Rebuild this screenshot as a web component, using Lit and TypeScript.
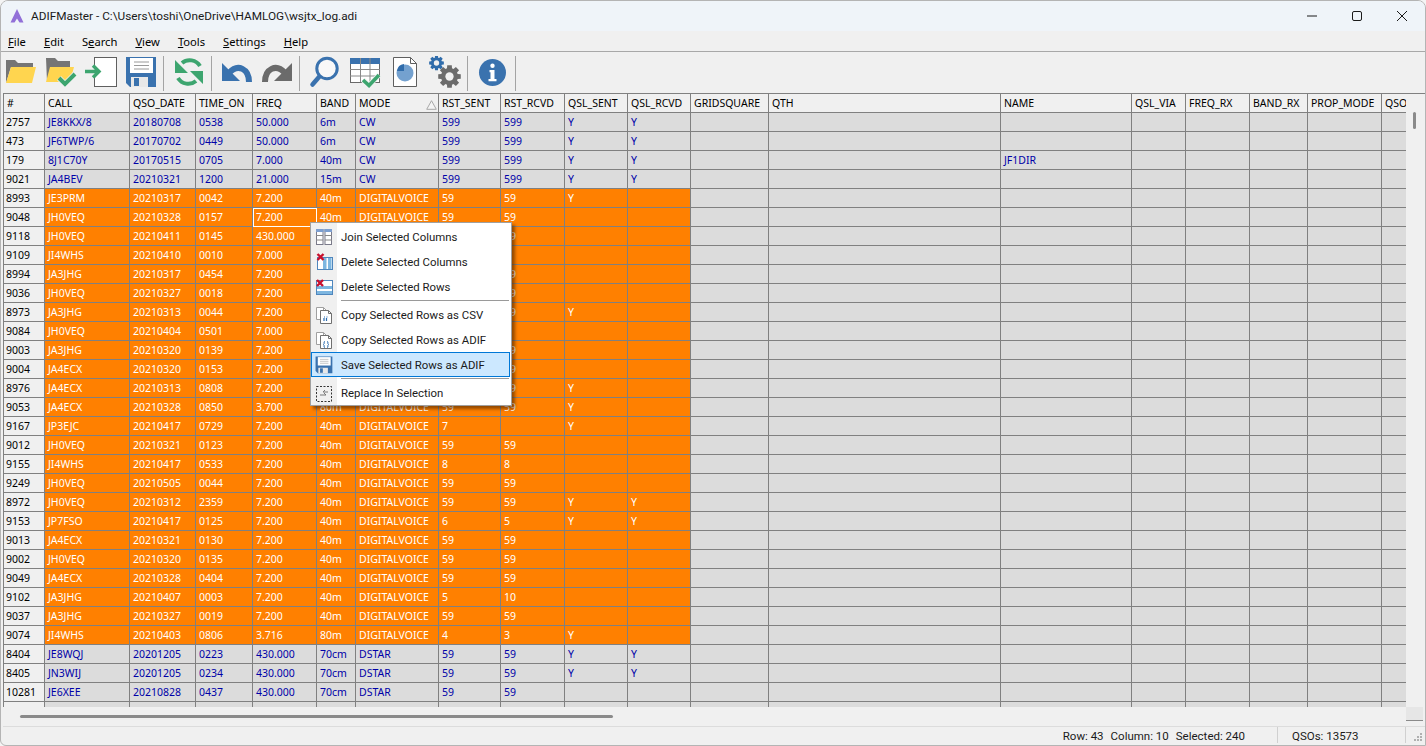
import { LitElement, html, css, svg } from "lit";
import { customElement } from "lit/decorators.js";

const BLUE = "#3a72ae";
const GREEN = "#3da56f";
const COLS = ["#","CALL","QSO_DATE","TIME_ON","FREQ","BAND","MODE","RST_SENT","RST_RCVD","QSL_SENT","QSL_RCVD","GRIDSQUARE","QTH","NAME","QSL_VIA","FREQ_RX","BAND_RX","PROP_MODE","QSO"];
const DV = "DIGITALVOICE";
const raw: string[] = [
 `2757|JE8KKX/8|20180708|0538|50.000|6m|CW|599|599|Y|Y`,
 `473|JF6TWP/6|20170702|0449|50.000|6m|CW|599|599|Y|Y`,
 `179|8J1C70Y|20170515|0705|7.000|40m|CW|599|599|Y|Y|||JF1DIR`,
 `9021|JA4BEV|20210321|1200|21.000|15m|CW|599|599|Y|Y`,
 `*8993|JE3PRM|20210317|0042|7.200|40m|${DV}|59|59|Y|`,
 `*9048|JH0VEQ|20210328|0157|7.200|40m|${DV}|59|59||`,
 `*9118|JH0VEQ|20210411|0145|430.000|70cm|DSTAR|59|59||`,
 `*9109|JI4WHS|20210410|0010|7.000|40m|${DV}|59|||`,
 `*8994|JA3JHG|20210317|0454|7.200|40m|${DV}|59|59||`,
 `*9036|JH0VEQ|20210327|0018|7.200|40m|${DV}|59|59||`,
 `*8973|JA3JHG|20210313|0044|7.200|40m|${DV}|59|59|Y|`,
 `*9084|JH0VEQ|20210404|0501|7.000|40m|${DV}|59|||`,
 `*9003|JA3JHG|20210320|0139|7.200|40m|${DV}|59|59||`,
 `*9004|JA4ECX|20210320|0153|7.200|40m|${DV}|59|59||`,
 `*8976|JA4ECX|20210313|0808|7.200|40m|${DV}|59|59|Y|`,
 `*9053|JA4ECX|20210328|0850|3.700|80m|${DV}|59|59|Y|`,
 `*9167|JP3EJC|20210417|0729|7.200|40m|${DV}|7||Y|`,
 `*9012|JH0VEQ|20210321|0123|7.200|40m|${DV}|59|59||`,
 `*9155|JI4WHS|20210417|0533|7.200|40m|${DV}|8|8||`,
 `*9249|JH0VEQ|20210505|0044|7.200|40m|${DV}|59|59||`,
 `*8972|JH0VEQ|20210312|2359|7.200|40m|${DV}|59|59|Y|Y`,
 `*9153|JP7FSO|20210417|0125|7.200|40m|${DV}|6|5|Y|Y`,
 `*9013|JA4ECX|20210321|0130|7.200|40m|${DV}|59|59||`,
 `*9002|JH0VEQ|20210320|0135|7.200|40m|${DV}|59|59||`,
 `*9049|JA4ECX|20210328|0404|7.200|40m|${DV}|59|59||`,
 `*9102|JA3JHG|20210407|0003|7.200|40m|${DV}|5|10||`,
 `*9037|JA3JHG|20210327|0019|7.200|40m|${DV}|59|59||`,
 `*9074|JI4WHS|20210403|0806|3.716|80m|${DV}|4|3|Y|`,
 `8404|JE8WQJ|20201205|0223|430.000|70cm|DSTAR|59|59|Y|Y`,
 `8405|JN3WIJ|20201205|0234|430.000|70cm|DSTAR|59|59|Y|Y`,
 `10281|JE6XEE|20210828|0437|430.000|70cm|DSTAR|59|59||`,
 `||||||||||||`,
];

const page = (x: number, y: number, w: number, h: number, f: number, stroke = "#5f5f5f") =>
  svg`<path d="M${x} ${y}h${w - f}l${f} ${f}v${h - f}h${-w}z" fill="#fff" stroke="${stroke}"/><path d="M${x + w - f} ${y}v${f}h${f}" fill="none" stroke="${stroke}"/>`;

const gear = (cx: number, cy: number, r: number, col: string) => {
  const teeth = 8;
  let d = "";
  for (let i = 0; i < teeth; i++) {
    const a = (i * 2 * Math.PI) / teeth;
    const w = 0.2;
    const p = (rad: number, ang: number) => `${(cx + rad * Math.cos(ang)).toFixed(2)} ${(cy + rad * Math.sin(ang)).toFixed(2)}`;
    d += `${i ? "L" : "M"}${p(r * 0.74, a - w * 1.5)}L${p(r, a - w)}L${p(r, a + w)}L${p(r * 0.74, a + w * 1.5)}`;
  }
  return svg`<path d="${d}z" fill="${col}"/><circle cx="${cx}" cy="${cy}" r="${r * 0.36}" fill="#f0f0f0"/>`;
};

const check = (pts: string, w = 3.6) =>
  svg`<polyline points="${pts}" fill="none" stroke="#f0f0f0" stroke-width="${w + 1.6}"/><polyline points="${pts}" fill="none" stroke="${GREEN}" stroke-width="${w}"/>`;

const floppy = svg`<path d="M1 1h30v30H5l-4-4z" fill="${BLUE}"/><rect x="5" y="2" width="23" height="15" fill="#fff"/><path d="M9 6h15M9 9.5h15M9 13h15" stroke="#9a9a9a"/><rect x="6" y="21" width="17" height="10" fill="#e8e8e8"/><rect x="9" y="22" width="5" height="8" fill="${BLUE}"/>`;

const TB: Array<unknown> = [
  svg`<path d="M1 4h9l3 3h15v4H6L1 27z" fill="#757575"/><path d="M6 11h25l-4 16H1z" fill="#ffd54f"/>`,
  svg`<path d="M1 2h9l3 3h12v6H6L2 26z" fill="#757575"/><path d="M5 11h24l-4 15H1z" fill="#ffd54f"/>${check("14,22 20,28 30,18", 4)}`,
  svg`<rect x="9.5" y="1.5" width="22" height="29" fill="#fff" stroke="#5f5f5f"/><rect x="6" y="10" width="5" height="12" fill="#f0f0f0"/><path d="M0 15.5h12M8 9.5l6 6-6 6" fill="none" stroke="${GREEN}" stroke-width="3.4"/>`,
  floppy,
  svg`<path d="M27 10A12 12 0 0 0 9 7M5 22A12 12 0 0 0 23 25" fill="none" stroke="${GREEN}" stroke-width="4"/><path d="M2 4v13h13zM30 28V15H17z" fill="${GREEN}"/>`,
  svg`<path d="M1 7v18h18z" fill="${BLUE}"/><path d="M28 26C28 13 17 7 8 17" fill="none" stroke="${BLUE}" stroke-width="6"/>`,
  svg`<path d="M31 7v18H13z" fill="#6b6b6b"/><path d="M4 26C4 13 15 7 24 17" fill="none" stroke="#6b6b6b" stroke-width="6"/>`,
  svg`<circle cx="18" cy="12.5" r="10.2" fill="#fff" fill-opacity=".5" stroke="${BLUE}" stroke-width="3"/><path d="M10 21L3.5 28.5" stroke="${BLUE}" stroke-width="4.5" stroke-linecap="round"/>`,
  svg`<rect x="1.5" y="2.5" width="29" height="24" fill="#fff" stroke="#6a6a6a"/><rect x="1" y="2" width="30" height="6" fill="${BLUE}"/><path d="M11.5 2v24M21 2v24M1 13.5h30M1 20h30" stroke="#8a8a8a"/>${check("14,24 20,29.5 30,19")}`,
  svg`${page(4.5, 1.5, 23, 29, 6)}<circle cx="16" cy="17" r="8.5" fill="#74a1cf"/><path d="M15 8A8 8 0 0 0 8 15h7z" fill="#2f6cab"/>`,
  svg`${gear(7.5, 7, 7.5, "#2f6cab")}${gear(20.5, 20.5, 11.5, "#6b6b6b")}`,
  svg`<circle cx="15.5" cy="16.5" r="13.5" fill="${BLUE}"/><circle cx="15.5" cy="9.8" r="2.2" fill="#fff"/><path d="M12.5 14h5v9h2v2.2h-8V23h2v-6.8h-1z" fill="#fff"/>`,
];

const MI = {
  join: svg`<rect x="1.5" y="1.5" width="6.5" height="15" fill="#fff" stroke="#7a7a8a"/><rect x="10" y="1.5" width="6.5" height="15" fill="#fff" stroke="#7a7a8a"/><rect x="1" y="1" width="7.5" height="3" fill="#7d9fd0"/><rect x="9.5" y="1" width="7.5" height="3" fill="#7d9fd0"/><path d="M1 7.5h7M1 12h7M10 7.5h7M10 12h7" stroke="#888"/>`,
  delc: svg`<rect x="2.5" y="4.5" width="15" height="12" fill="#fff" stroke="#4f86bd"/><rect x="8" y="5" width="3.5" height="11" fill="#7db6e0"/><rect x="13" y="5" width="3.5" height="11" fill="#7db6e0"/><path d="M2.5 1l6 6M8.5 1l-6 6" stroke="#c8102e" stroke-width="2.4"/>`,
  delr: svg`<rect x="1.5" y="2.5" width="16" height="14" fill="#fff" stroke="#4f86bd"/><rect x="2" y="8" width="15" height="3" fill="#7db6e0"/><rect x="2" y="13" width="15" height="3" fill="#7db6e0"/><path d="M2 2l6 6M8 2l-6 6" stroke="#c8102e" stroke-width="2.4"/>`,
  csv: svg`${page(1.5, 1.5, 10, 12, 3, "#a0a0a0")}${page(5.5, 4.5, 11, 13, 3, "#707070")}<path d="M9 12v3M11.5 12v3M9 11h1M11.5 11h1" stroke="#2a6cb0" stroke-width="1.2"/>`,
  adif: svg`${page(1.5, 1.5, 10, 12, 3, "#a0a0a0")}${page(5.5, 4.5, 11, 13, 3, "#707070")}<path d="M10 10.5c-2 0 0 2.5-1.5 3 1.500.5-.5 3 1.500 3M12 10.5c2 0 0 2.5 1.500 3-1.500.5.5 3-1.500 3" fill="none" stroke="#2a6cb0"/>`,
  save: svg`<g transform="scale(.56)">${floppy}</g>`,
  repl: svg`<rect x="1.5" y="2.5" width="15" height="15" fill="none" stroke="#333" stroke-dasharray="2 1.5"/><path d="M5 11h6l-2-2M13 8H8l2-2" fill="none" stroke="#777"/>`,
};

@customElement("app-root")
export class AppRoot extends LitElement {
  static styles = css`
    :host { display: block; width: 1426px; height: 746px; overflow: hidden; background: #f4f4f4; font-family: "Noto Sans", sans-serif; color: #000; }
    .win { box-sizing: border-box; height: 746px; display: flex; flex-direction: column; background: #f0f0f0; border: 1px solid #b4b4b4; border-radius: 8px 8px 0 6px; overflow: hidden; }
    .title { height: 30px; flex: none; background: #eff4f9; display: flex; align-items: center; }
    .logo { margin-left: 9px; width: 14px; height: 14px; flex: none; }
    .ttext { margin-left: 7px; font: 11.8px Roboto, sans-serif; color: #1a1a1a; white-space: nowrap; flex: 1; }
    .wbtn { width: 45px; height: 30px; display: flex; align-items: center; justify-content: center; flex: none; }
    .wbtn svg { width: 12px; height: 12px; }
    .wctl { display: flex; margin-right: 1px; }
    .menubar { height: 20px; flex: none; border-bottom: 1px solid #a8a8a8; display: flex; gap: 18px; padding-left: 7px; align-items: center; font-size: 11.2px; }
    .menubar u { text-underline-offset: 1px; }
    .tool { height: 41px; flex: none; display: flex; align-items: flex-start; padding-top: 4px; box-sizing: border-box; }
    .tb { width: 40px; height: 32px; display: flex; justify-content: center; flex: none; }
    .tb svg { width: 32px; height: 32px; }
    .ts { width: 1px; height: 35px; background: #a4a4a4; margin: 0 5px 0 2px; flex: none; }
    .body { height: 633px; flex: none; border-top: 1px solid #808080; margin-left: 2px; display: flex; flex-direction: column; }
    .mainrow { height: 613px; flex: none; display: flex; border-left: 1px solid #808080; }
    .table { width: 1402px; flex: none; height: 613px; overflow: hidden; display: grid; grid-template-columns: 41px 85px 66px 57px 64px 39px 83px 62px 64px 63px 63px 78px 232px 131px 54px 64px 58px 74px 24px; grid-auto-rows: 19px; font-size: 10.5px; line-height: 18px; background: #dcdcdc; }
    .c { box-sizing: border-box; border-right: 1px solid #808080; border-bottom: 1px solid #808080; padding-left: 3px; overflow: hidden; white-space: nowrap; color: #0000a8; background: #dcdcdc; position: relative; }
    .c.last { border-right: 0; }
    .c.h { background: #f0f0f0; color: #000; padding-left: 3px; }
    .c.n { background: #f0f0f0; color: #000; padding-left: 2px; }
    .c.sel { background: #ff8000; color: #fff; }
    .c.focus { outline: 1px solid #fff; outline-offset: -1px; }
    .sort { position: absolute; right: 1px; top: 6px; width: 11px; height: 10px; }
    .vbar { width: 17px; flex: none; position: relative; background: #f0f0f0; display: flex; justify-content: center; }
    .vthumb { width: 3px; height: 17px; background: #8a8a8a; margin-top: 18px; border-radius: 2px; }
    .hrow { height: 19px; flex: none; display: flex; margin-left: 1px; }
    .htrack { width: 1402px; flex: none; padding: 8px 0 0 16px; box-sizing: border-box; }
    .hthumb { width: 593px; height: 3px; background: #8a8a8a; border-radius: 2px; }
    .corner { width: 17px; height: 14px; flex: none; background: #e6e6e6; border-bottom: 1px solid #8a8a8a; box-sizing: border-box; }
    .status { flex: 1; display: flex; border-top: 1px solid #dcdcdc; font: 11.5px Roboto, sans-serif; color: #1a1a1a; position: relative; align-items: center; }
    .s1 { width: 1275px; box-sizing: border-box; padding-right: 32px; flex: none; border-right: 1px solid #d0d0d0; height: 100%; display: flex; justify-content: flex-end; align-items: center; gap: 7px; padding-top: 2px; }
    .s2 { width: 128px; box-sizing: border-box; padding: 2px 0 0 14px; flex: none; border-right: 1px solid #d0d0d0; height: 100%; display: flex; align-items: center; }
    .grip { position: absolute; right: 3px; bottom: 2px; width: 9px; height: 9px; }
    .menu { position: absolute; left: 310px; top: 222px; width: 202px; height: 184px; box-sizing: border-box; background: #fff; border: 1px solid #a0a0a0; box-shadow: 3px 3px 3px rgba(60,30,0,.55); padding: 1px 0; font: 11.4px Roboto, sans-serif; color: #1a1a1a; z-index: 5; }
    .gutter { position: absolute; left: 0; top: 0; bottom: 0; width: 26px; background: #f0f0f0; }
    .mi { position: relative; height: 25px; display: flex; align-items: center; box-sizing: border-box; }
    .mi.on { background: #cce8ff; border: 1px solid #0078d7; margin-right: 1px; }
    .mi.on .ic { margin-left: -1px; }
    .mi .ic { width: 26px; flex: none; display: flex; justify-content: center; margin-right: 4px; }
    .mi .ic svg { width: 18px; height: 18px; }
    .msep { position: relative; height: 3px; margin-left: 30px; margin-right: 2px; display: flex; align-items: center; }
    .msep::after { content: ""; flex: 1; height: 1px; background: #9a9a9a; }
  `;

  private cells() {
    const out: unknown[] = [];
    COLS.forEach((c, i) =>
      out.push(html`<div class="c h ${i === COLS.length - 1 ? "last" : ""}">${c}${c === "MODE" ? html`<svg class="sort" viewBox="0 0 11 10"><path d="M5.5 .7L10.3 9.3H.7z" fill="#f4f4f4" stroke="#a8a8a8"/></svg>` : ""}</div>`)
    );
    raw.forEach((line, r) => {
      const sel = line.startsWith("*");
      const v = (sel ? line.slice(1) : line).split("|");
      if (r === raw.length - 1) v[13] = "Katsuhiro";
      COLS.forEach((_, i) => {
        const cls = ["c"];
        if (i === 0) cls.push("n");
        else if (sel && i <= 10) cls.push("sel");
        if (r === 5 && i === 4) cls.push("focus");
        if (i === COLS.length - 1) cls.push("last");
        out.push(html`<div class="${cls.join(" ")}">${v[i] ?? ""}</div>`);
      });
    });
    return out;
  }

  render() {
    const tb = (i: number) => html`<div class="tb"><svg viewBox="0 0 32 32">${TB[i]}</svg></div>`;
    const sep = html`<div class="ts"></div>`;
    const mi = (ic: unknown, label: string, on = false) =>
      html`<div class="mi ${on ? "on" : ""}"><span class="ic"><svg viewBox="0 0 18 18">${ic}</svg></span>${label}</div>`;
    return html`
      <div class="win">
        <div class="title">
          <svg class="logo" viewBox="0 0 14 14"><path d="M7 0L13.5 13.5H9.5L7 9.5 4.5 13.5H.5z" fill="#9270d8"/></svg>
          <div class="ttext">ADIFMaster - C:\\Users\\toshi\\OneDrive\\HAMLOG\\wsjtx_log.adi</div>
          <div class="wctl">
            <div class="wbtn"><svg viewBox="0 0 12 12"><path d="M1 6h10" stroke="#1a1a1a"/></svg></div>
            <div class="wbtn"><svg viewBox="0 0 12 12"><rect x="1.5" y="1.5" width="9" height="9" rx="1.5" fill="none" stroke="#1a1a1a"/></svg></div>
            <div class="wbtn"><svg viewBox="0 0 12 12"><path d="M1 1l10 10M11 1L1 11" stroke="#1a1a1a"/></svg></div>
          </div>
        </div>
        <div class="menubar">
          <span><u>F</u>ile</span><span><u>E</u>dit</span><span>S<u>e</u>arch</span><span><u>V</u>iew</span><span><u>T</u>ools</span><span><u>S</u>ettings</span><span><u>H</u>elp</span>
        </div>
        <div class="tool">
          ${tb(0)}${tb(1)}${tb(2)}${tb(3)}${sep}${tb(4)}${sep}${tb(5)}${tb(6)}${sep}${tb(7)}${tb(8)}${tb(9)}${tb(10)}${sep}${tb(11)}${sep}
        </div>
        <div class="body">
          <div class="mainrow">
            <div class="table">${this.cells()}</div>
            <div class="vbar"><div class="vthumb"></div></div>
          </div>
          <div class="hrow">
            <div class="htrack"><div class="hthumb"></div></div>
            <div class="corner"></div>
          </div>
          <div class="status">
            <div class="s1"><span>Row: 43</span><span>Column: 10</span><span>Selected: 240</span></div>
            <div class="s2">QSOs: 13573</div>
            <svg class="grip" viewBox="0 0 9 9"><path d="M7 1h2v2H7zM4 4h2v2H4zM7 4h2v2H7zM1 7h2v2H1zM4 7h2v2H4zM7 7h2v2H7z" fill="#b0b0b0"/></svg>
          </div>
        </div>
      </div>
      <div class="menu">
        <div class="gutter"></div>
        ${mi(MI.join, "Join Selected Columns")}
        ${mi(MI.delc, "Delete Selected Columns")}
        ${mi(MI.delr, "Delete Selected Rows")}
        <div class="msep"></div>
        ${mi(MI.csv, "Copy Selected Rows as CSV")}
        ${mi(MI.adif, "Copy Selected Rows as ADIF")}
        ${mi(MI.save, "Save Selected Rows as ADIF", true)}
        <div class="msep"></div>
        ${mi(MI.repl, "Replace In Selection")}
      </div>
    `;
  }
}
